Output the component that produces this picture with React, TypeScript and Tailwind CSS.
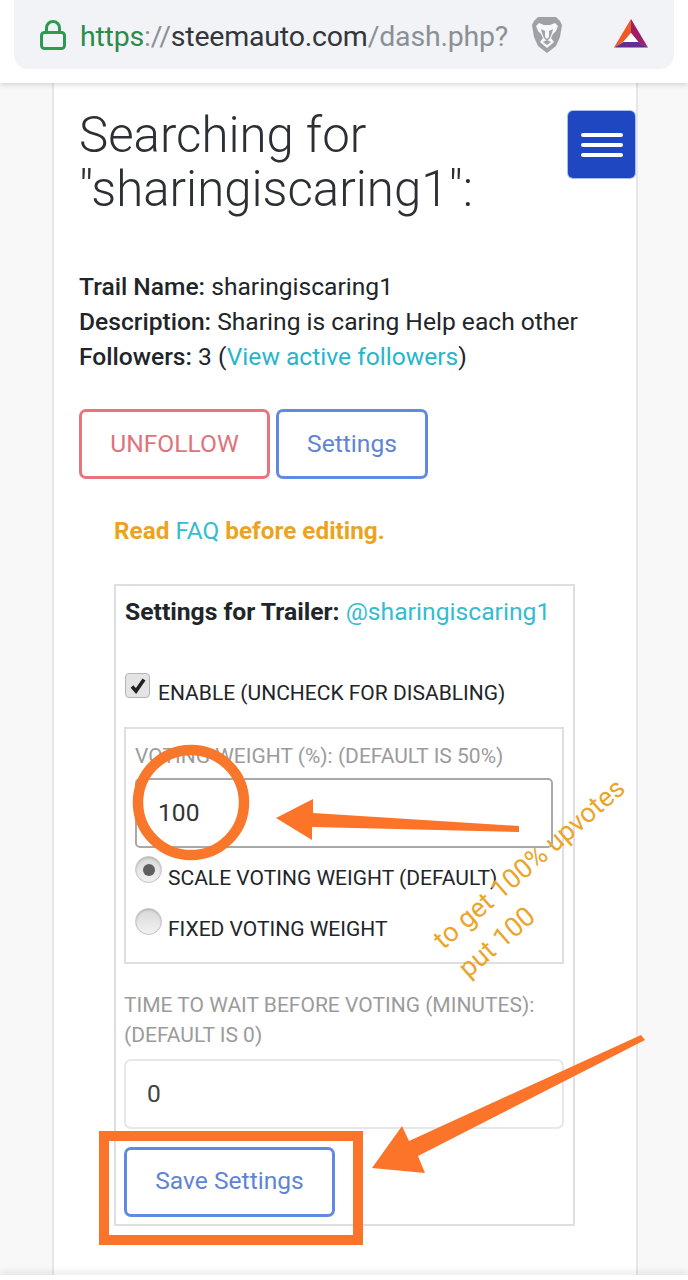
import React from "react";

const roboto = "font-['Roboto',sans-serif]";

function Lion() {
  return (
    <svg width="32" height="38" viewBox="0 0 32 38" className="shrink-0">
      <path d="M7 1 L25 1 L29 5 L31 9 L29 21 L25 30 L16 37 L7 30 L3 21 L1 9 L3 5 Z" fill="#9ea1a6" />
      <path d="M8 7 L13 9 L19 9 L24 7 L27 10 L25 15 L22 18 L20 22 L23 26 L16 32 L9 26 L12 22 L10 18 L7 15 L5 10 Z" fill="#f7f8fa" />
      <path d="M10 13 L14 15 L14 21 L16 23 L18 21 L18 15 L22 13 L21 17 L19 22 L16 25 L13 22 L11 17 Z" fill="#9ea1a6" />
      <path d="M12 26 L16 24 L20 26 L16 29 Z" fill="#9ea1a6" />
    </svg>
  );
}

function Bat() {
  return (
    <svg width="34" height="29" viewBox="0 0 34 29" className="shrink-0">
      <polygon points="17,0 0,28.5 9,23 17,14" fill="#f15a22" />
      <polygon points="17,0 34,28.5 24,23 17,14" fill="#9e1f63" />
      <polygon points="0,28.5 34,28.5 24.5,23 9.5,23" fill="#662d91" />
      <polygon points="17,14 24.5,23 9.5,23" fill="#ffffff" />
    </svg>
  );
}

function Radio({ checked }: { checked?: boolean }) {
  return (
    <span className="flex h-[27px] w-[27px] shrink-0 items-center justify-center rounded-full border border-[#c4c4c4] bg-[linear-gradient(#d8d8d8,#f2f2f2)] shadow-[inset_0_1px_2px_rgba(0,0,0,0.2)]">
      {checked && <span className="h-[12px] w-[12px] rounded-full bg-[#5f5f62]" />}
    </span>
  );
}

export default function App() {
  return (
    <div className={`relative flex h-[1280px] w-[688px] flex-col overflow-hidden bg-[#f8f8f9] ${roboto} text-[#212529]`}>
      {/* Browser bar */}
      <header className="z-10 h-[83px] shrink-0 bg-white px-[14px] shadow-[0_2px_5px_rgba(0,0,0,0.14)]">
        <div className="flex h-[69px] items-center rounded-b-[14px] bg-[#f1f3f6] pl-[26px]">
          <svg width="26" height="30" viewBox="0 0 26 30" fill="none" stroke="#2c9a50" strokeWidth="3" className="shrink-0">
            <rect x="1.5" y="12.5" width="23" height="16" rx="3" />
            <path d="M6.5 12V8a6.5 6.5 0 0 1 13 0v4" />
          </svg>
          <div className="ml-[14px] mt-[4px] w-[427px] whitespace-nowrap text-[28.5px] leading-[65px] tracking-[-0.2px]">
            <span className="text-[#2c8a4b]">https</span>
            <span className="text-[#8b9096]">://</span>
            <span className="text-[#33363a]">steemauto.com</span>
            <span className="text-[#8b9096]">/dash.php?</span>
          </div>
          <div className="ml-[24px]">
            <Lion />
          </div>
          <div className="ml-[51px] mb-[2px]">
            <Bat />
          </div>
        </div>
      </header>

      {/* Page card */}
      <main className="ml-[52px] flex w-[586px] flex-1 flex-col border-x-2 border-[#e6e7e9] bg-white pl-[25px]">
        <h1 className="mt-[25px] w-[440px] text-[49.2px] font-light leading-[54px] text-[#2c2f33]">
          Searching for "sharingiscaring1":
        </h1>

        <div className="mt-[53px] text-[24.6px] leading-[35px]">
          <p>
            <b className="font-medium">Trail Name:</b> sharingiscaring1
          </p>
          <p>
            <b className="font-medium">Description:</b> Sharing is caring Help each other
          </p>
          <p>
            <b className="font-medium">Followers:</b> 3 (<span className="text-[#27b5cc]">View active followers</span>)
          </p>
        </div>

        <div className="mt-[35px] flex gap-[6px] text-[24.6px]">
          <div className="flex h-[70px] w-[191px] items-center justify-center rounded-[7px] border-[3px] border-[#e8747c] text-[#e0737c]">
            UNFOLLOW
          </div>
          <div className="flex h-[70px] w-[152px] items-center justify-center rounded-[7px] border-[3px] border-[#5f8adf] text-[#5f84d6]">
            Settings
          </div>
        </div>

        <p className="ml-[35px] mt-[34px] text-[24.3px] font-bold leading-[35px] text-[#eba41f]">
          Read <span className="font-normal text-[#35bcd0]">FAQ</span> before editing.
        </p>

        {/* Settings box */}
        <section className="ml-[35px] mt-[36px] flex h-[642px] w-[461px] flex-col border-2 border-[#dedfe1] px-[9px]">
          <p className="mt-[8px] whitespace-nowrap text-[24.7px] leading-[35px]">
            <b className="font-bold">Settings for Trailer:</b> <span className="text-[#35bcd0]">@sharingiscaring1</span>
          </p>

          <div className="mt-[44px] flex items-start">
            <span className="flex h-[25px] w-[25px] shrink-0 items-center justify-center rounded-[4px] border border-[#b5b5b5] bg-[#e4e4e4]">
              <svg width="18" height="18" viewBox="0 0 18 18" fill="none" stroke="#222" strokeWidth="3.6">
                <path d="M3 9.5 L7 14 L15 2.5" />
              </svg>
            </span>
            <span className="ml-[8px] mt-[5px] whitespace-nowrap text-[21px] leading-[30px]">ENABLE (UNCHECK FOR DISABLING)</span>
          </div>

          <div className="mt-[19px] flex h-[237px] w-[440px] -ml-[1px] flex-col border-2 border-[#dedfe1] px-[9px]">
            <p className="mt-[12px] whitespace-nowrap text-[21px] leading-[30px] text-[#9b9b9b]">VOTING WEIGHT (%): (DEFAULT IS 50%)</p>
            <div className="mt-[7px] flex h-[70px] w-[418px] items-center rounded-[5px] border-2 border-[#a8a8a8] pl-[21px] text-[24.6px] text-[#333]">
              100
            </div>
            <div className="mt-[8px] flex items-start">
              <Radio checked />
              <span className="ml-[6px] mt-[7px] whitespace-nowrap text-[21px] leading-[30px]">SCALE VOTING WEIGHT (DEFAULT)</span>
            </div>
            <div className="mt-[15px] flex items-start">
              <Radio />
              <span className="ml-[6px] mt-[6px] whitespace-nowrap text-[21px] leading-[30px]">FIXED VOTING WEIGHT</span>
            </div>
          </div>

          <p className="-ml-[1px] mt-[26px] whitespace-nowrap text-[21px] leading-[30px] text-[#9b9b9b]">
            TIME TO WAIT BEFORE VOTING (MINUTES):
            <br />
            (DEFAULT IS 0)
          </p>
          <div className="mt-[9px] flex h-[70px] w-[440px] -ml-[1px] items-center rounded-[7px] border-2 border-[#e6e7e9] pl-[21px] text-[24.6px] text-[#444]">
            0
          </div>
          <div className="mt-[18px] flex h-[70px] w-[211px] -ml-[1px] items-center justify-center rounded-[7px] border-[3px] border-[#5f8adf] pb-[2px] text-[24.6px] text-[#5f84d6]">
            Save Settings
          </div>
        </section>
      </main>

      {/* Bottom edge of the screen */}
      <div className="h-[5px] shrink-0 bg-white shadow-[0_-3px_6px_rgba(0,0,0,0.1)]" />

      {/* Hamburger button */}
      <div className="absolute left-[568px] top-[111px] flex h-[67px] w-[67px] flex-col items-center justify-center gap-[6px] rounded-[5px] bg-[#1f47c2] shadow-[0_0_0_1px_#a9bdf0]">
        <span className="h-[4px] w-[42px] rounded-full bg-white" />
        <span className="h-[4px] w-[42px] rounded-full bg-white" />
        <span className="h-[4px] w-[42px] rounded-full bg-white" />
      </div>

      {/* Hand-drawn annotations */}
      <svg width="688" height="1280" viewBox="0 0 688 1280" className="pointer-events-none absolute left-0 top-0">
        <ellipse cx="191" cy="802.5" rx="53" ry="52.5" fill="none" stroke="#f9772b" strokeWidth="10.5" />
        <polygon points="276,818 313,799 313,813 519,826 519,832 312,827 312,840" fill="#fb742a" />
        <polygon points="641,1035 645,1040 418,1156 425,1173 372,1168 402,1126 409,1141" fill="#fb742a" />
        <rect x="104" y="1136" width="254" height="104" fill="none" stroke="#fb742a" strokeWidth="10" />
      </svg>

      <div className="pointer-events-none absolute left-[425px] top-[929px] w-[270px] origin-top-left -rotate-[41deg] whitespace-nowrap text-[27px] leading-[38px] text-[#eba52a]">
        to get 100% upvotes
        <br />
        put 100
      </div>
    </div>
  );
}
